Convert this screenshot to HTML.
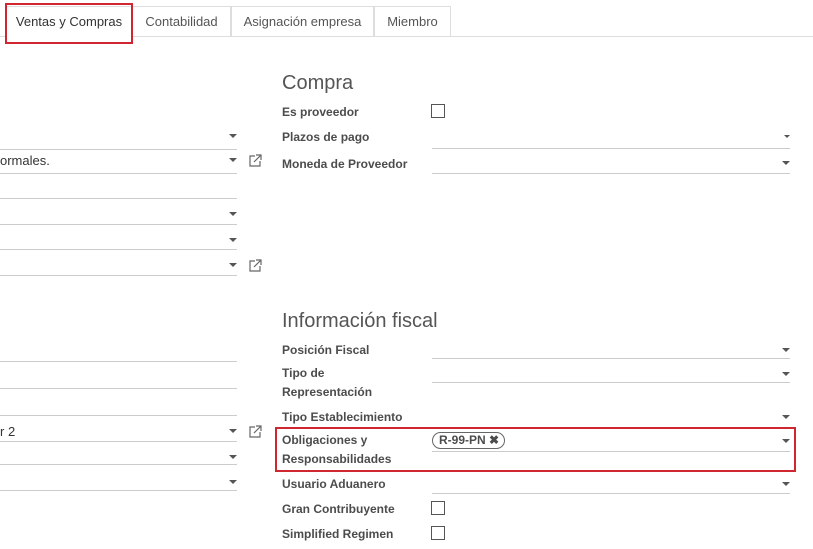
<!DOCTYPE html>
<html><head><meta charset="utf-8"><style>
body{margin:0;width:813px;height:549px;overflow:hidden;background:#fff;font-family:"Liberation Sans",sans-serif;position:relative}
.a{position:absolute}
.tab{position:absolute;top:6px;height:30px;border:1px solid #ddd;border-bottom:none;font-size:13px;color:#555;line-height:30px;text-align:center;box-sizing:border-box}
.ln{position:absolute;height:1px;background:#ccc}
.car{position:absolute;width:0;height:0;border-left:4px solid transparent;border-right:4px solid transparent;border-top:4px solid #555}
.lb{position:absolute;left:282px;font-size:12px;font-weight:bold;color:#4c4c4c;margin-top:1px}
.cb{position:absolute;left:431px;width:12px;height:12px;border:1px solid #555}
.h{position:absolute;left:282px;font-size:20px;color:#555}
.t{position:absolute;font-size:13px;color:#333}
</style></head><body>
<div class="ln" style="top:36px;left:0;width:813px;background:#ddd"></div>
<div class="tab" style="left:6px;width:126px;height:31px;background:#fff;color:#333">Ventas y Compras</div>
<div class="tab" style="left:132px;width:99px">Contabilidad</div>
<div class="tab" style="left:231px;width:143px">Asignación empresa</div>
<div class="tab" style="left:374px;width:77px">Miembro</div>
<div class="a" style="left:5px;top:3px;width:124px;height:37px;border:2px solid #d0262f"></div>

<div class="car" style="left:229px;top:134px"></div><div class="ln" style="left:0;width:237px;top:149px"></div>
<div class="t" style="left:0;top:153px">ormales.</div>
<div class="car" style="left:229px;top:158px"></div><div class="ln" style="left:0;width:237px;top:173px"></div>
<div class="ln" style="left:0;width:237px;top:198px"></div>
<div class="car" style="left:229px;top:212px"></div><div class="ln" style="left:0;width:237px;top:224px"></div>
<div class="car" style="left:229px;top:238px"></div><div class="ln" style="left:0;width:237px;top:249px"></div>
<div class="car" style="left:229px;top:263px"></div><div class="ln" style="left:0;width:237px;top:275px"></div>
<div class="ln" style="left:0;width:237px;top:361px"></div>
<div class="ln" style="left:0;width:237px;top:388px"></div>
<div class="ln" style="left:0;width:237px;top:415px"></div>
<div class="t" style="left:0;top:424px">r 2</div>
<div class="car" style="left:229px;top:429px"></div><div class="ln" style="left:0;width:237px;top:441px"></div>
<div class="car" style="left:229px;top:455px"></div><div class="ln" style="left:0;width:237px;top:464px"></div>
<div class="car" style="left:229px;top:480px"></div><div class="ln" style="left:0;width:237px;top:490px"></div>
<svg class="a" style="left:248px;top:154px" width="14" height="13" viewBox="0 0 14 13"><path d="M7 2H2v10h10V7M8 1h5v5M13 1L6 8" fill="none" stroke="#666" stroke-width="1.2"/></svg>
<svg class="a" style="left:248px;top:259px" width="14" height="13" viewBox="0 0 14 13"><path d="M7 2H2v10h10V7M8 1h5v5M13 1L6 8" fill="none" stroke="#666" stroke-width="1.2"/></svg>
<svg class="a" style="left:248px;top:425px" width="14" height="13" viewBox="0 0 14 13"><path d="M7 2H2v10h10V7M8 1h5v5M13 1L6 8" fill="none" stroke="#666" stroke-width="1.2"/></svg>

<div class="h" style="top:72px">Compra</div>
<div class="lb" style="top:104px">Es proveedor</div><div class="cb" style="top:104px"></div>
<div class="lb" style="top:129px">Plazos de pago</div><div class="car" style="left:784px;top:135px;border-width:3px 3px 0"></div><div class="ln" style="left:432px;width:358px;top:148px"></div>
<div class="lb" style="top:156px">Moneda de Proveedor</div><div class="car" style="left:782px;top:161px"></div><div class="ln" style="left:432px;width:358px;top:173px"></div>

<div class="h" style="top:310px">Información fiscal</div>
<div class="lb" style="top:342px">Posición Fiscal</div><div class="car" style="left:782px;top:348px"></div><div class="ln" style="left:432px;width:358px;top:358px"></div>
<div class="lb" style="line-height:19px;top:363px">Tipo de<br>Representación</div><div class="car" style="left:782px;top:372px"></div><div class="ln" style="left:432px;width:358px;top:382px"></div>
<div class="lb" style="top:409px">Tipo Establecimiento</div><div class="car" style="left:782px;top:415px"></div>
<div class="lb" style="top:430px;line-height:19px">Obligaciones y<br>Responsabilidades</div>
<div class="a" style="left:432px;top:432px;border:1.5px solid #666;border-radius:9px;font-size:12px;font-weight:bold;color:#4c4c4c;line-height:15px;padding-left:6px;box-sizing:border-box;width:73px;height:17px">R-99-PN ✖</div>
<div class="car" style="left:782px;top:439px"></div><div class="ln" style="left:432px;width:358px;top:451px"></div>
<div class="a" style="left:275px;top:427px;width:517px;height:41px;border:2px solid #d0262f"></div>
<div class="lb" style="top:476px">Usuario Aduanero</div><div class="car" style="left:782px;top:482px"></div><div class="ln" style="left:432px;width:358px;top:493px"></div>
<div class="lb" style="top:501px">Gran Contribuyente</div><div class="cb" style="top:501px"></div>
<div class="lb" style="top:526px">Simplified Regimen</div><div class="cb" style="top:526px"></div>
</body></html>
